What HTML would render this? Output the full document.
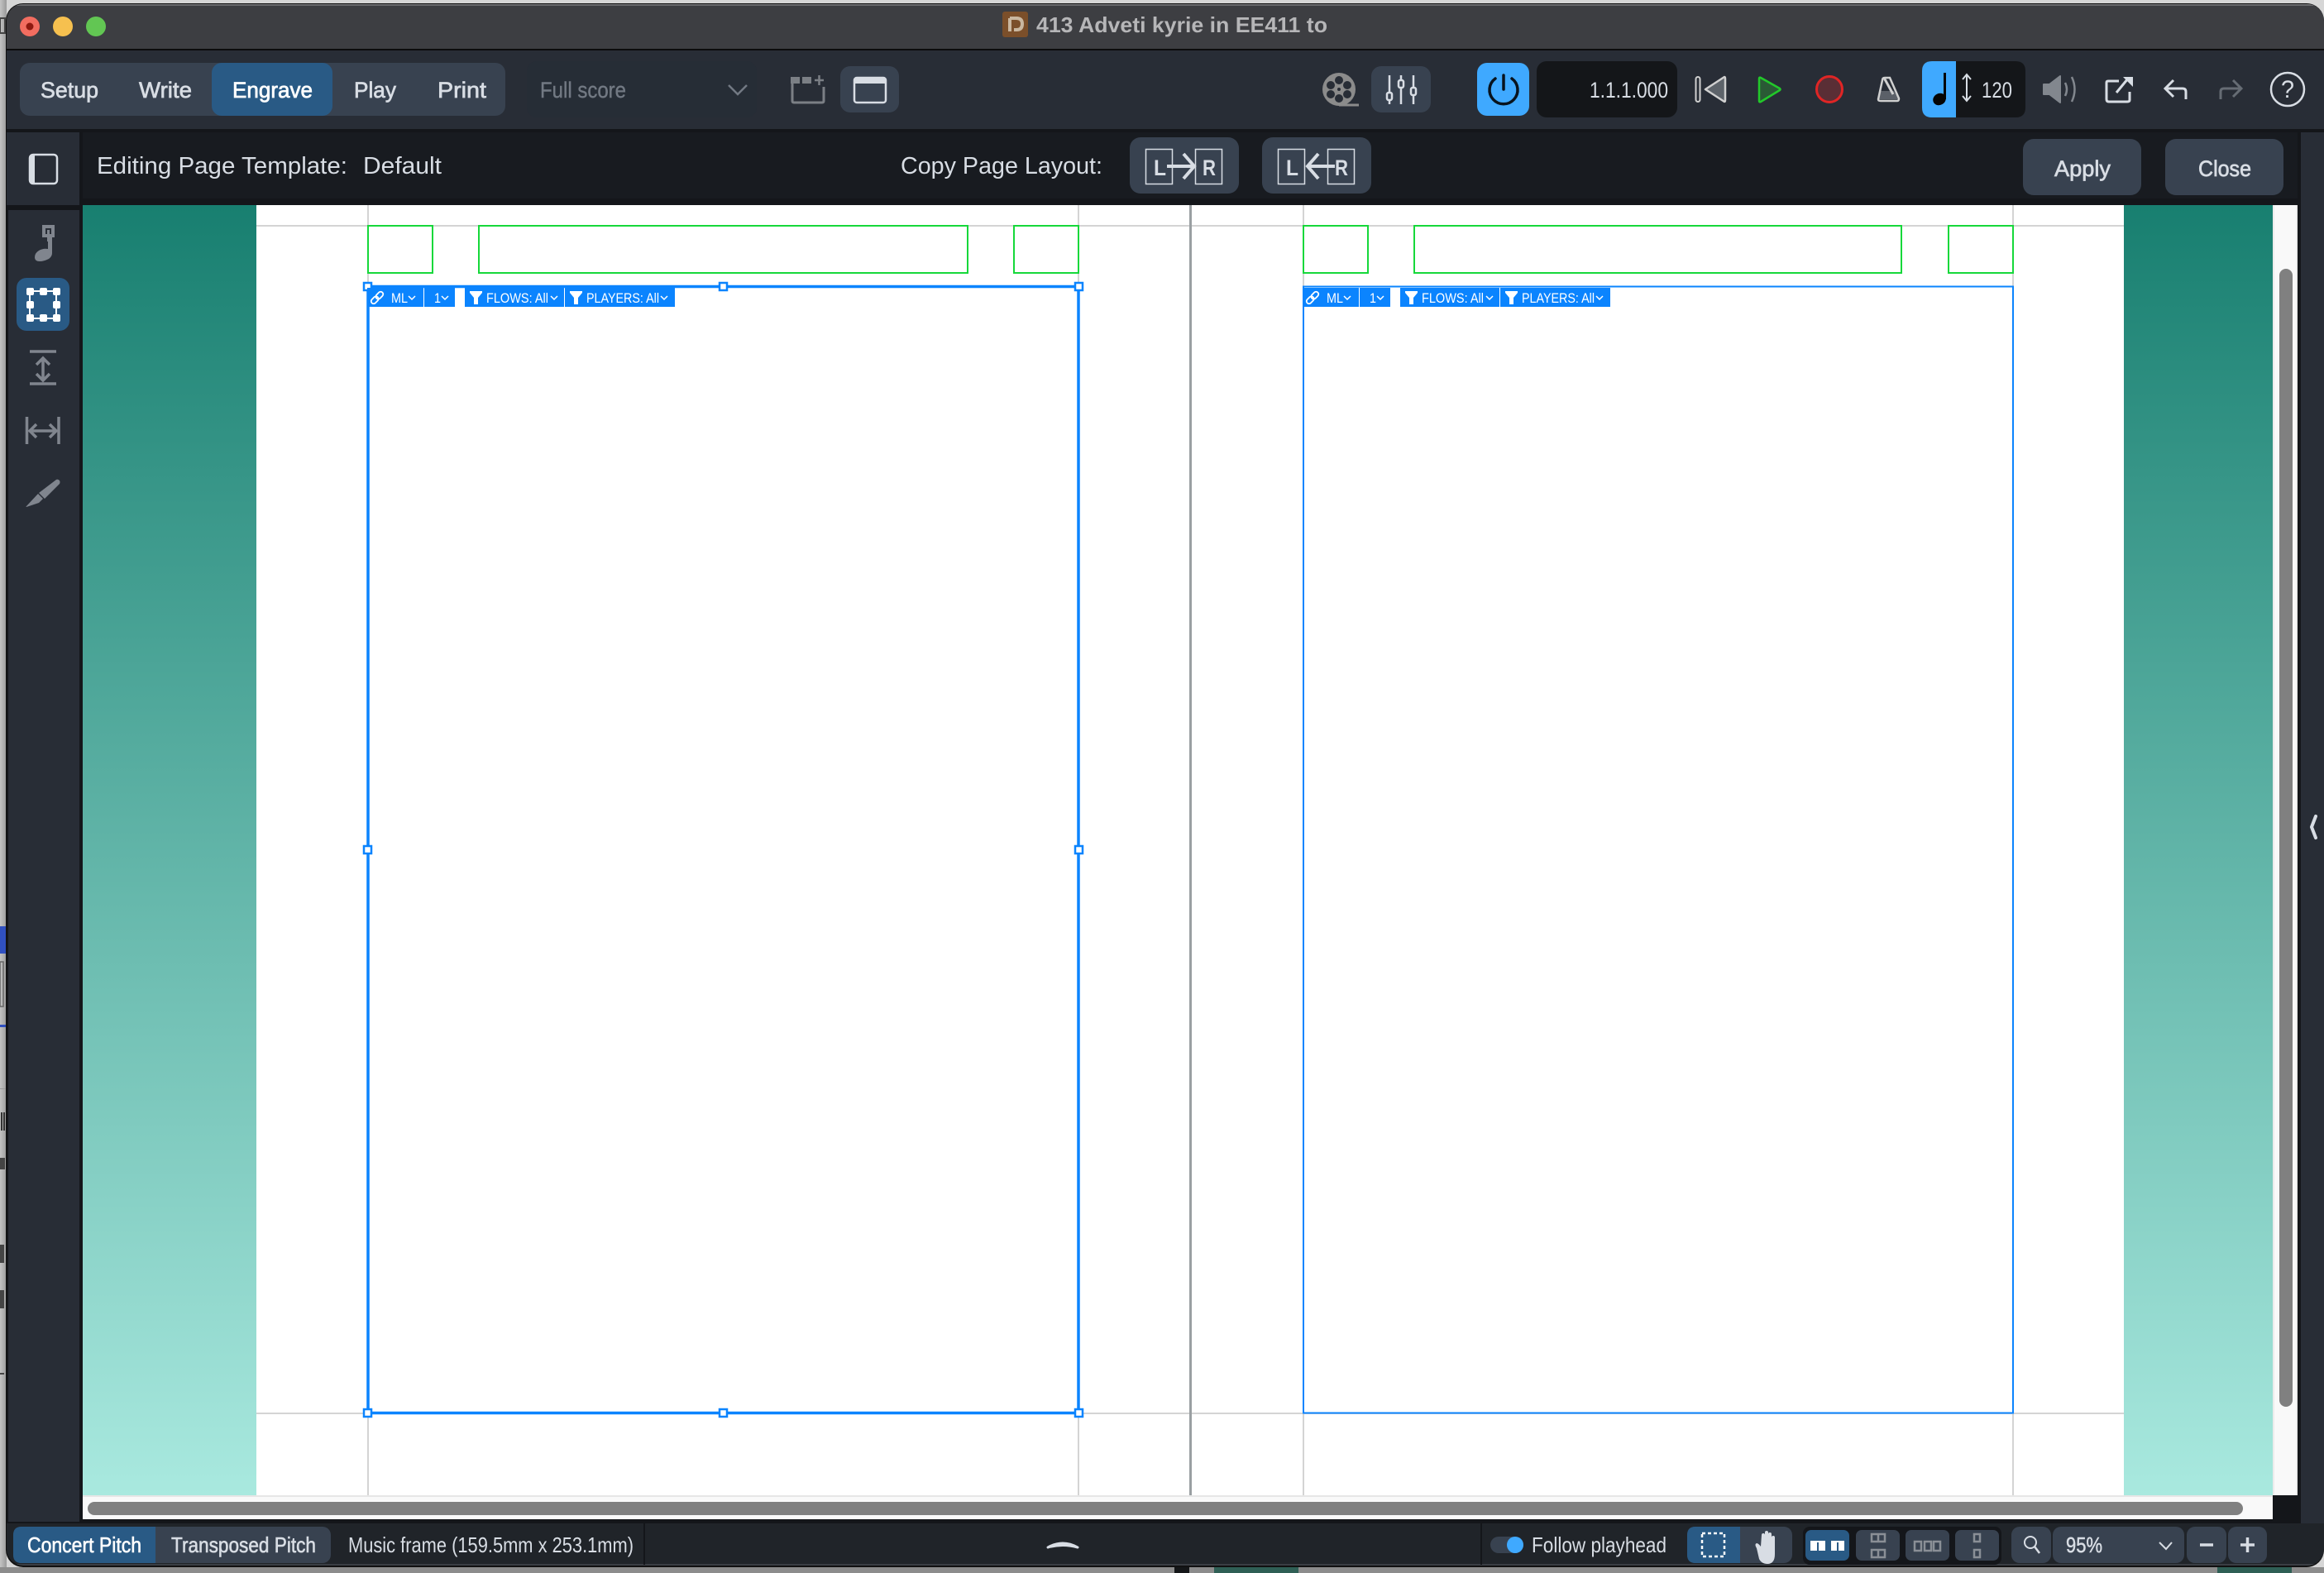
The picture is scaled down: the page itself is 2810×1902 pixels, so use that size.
<!DOCTYPE html>
<html><head><meta charset="utf-8"><title>413 Adveti kyrie in EE411 to</title>
<style>
html,body{margin:0;padding:0;background:#b5b5b5;width:2810px;height:1902px;overflow:hidden}
svg{display:block}
text{font-family:"Liberation Sans",sans-serif;font-size:27px;fill:#d8dde4}
.s{stroke:#d8dde4;stroke-width:.7}
.t{font-size:16.500px;fill:#fff}
.c{font-size:29px}
.b{font-size:26px}
</style></head><body>
<svg width="2810" height="1902" viewBox="0 0 2810 1902" xmlns="http://www.w3.org/2000/svg">
<defs>
<linearGradient id="teal" x1="0" y1="0" x2="0" y2="1"><stop offset="0" stop-color="#187f70"/><stop offset="1" stop-color="#a9e9df"/></linearGradient>
<linearGradient id="back" x1="0" y1="0" x2="1" y2="0"><stop offset="0" stop-color="#c4c4c4"/><stop offset="1" stop-color="#9a9a9a"/></linearGradient>
<clipPath id="win"><rect x="8" y="5" width="2802" height="1888" rx="20"/></clipPath>
</defs>
<!-- desktop behind -->
<rect width="2810" height="1902" fill="#d6d6d6"/>
<rect x="0" y="0" width="8" height="1902" fill="url(#back)"/>
<rect x="0" y="1895" width="2810" height="7" fill="#8c8c8c"/>
<rect x="1420" y="1895" width="18" height="7" fill="#141618"/>
<rect x="1468" y="1895" width="102" height="7" fill="#2f5f55"/>
<rect x="2681" y="1895" width="90" height="7" fill="#2f5f55"/>
<rect x="0" y="1120" width="7" height="33" fill="#3050c0"/>
<rect x="0" y="1163" width="4" height="54" fill="none" stroke="#666" stroke-width="1.500"/>
<rect x="0" y="1239" width="7" height="3" fill="#3050c0"/>
<rect x="0" y="1316" width="7" height="1" fill="#999"/>
<rect x="1" y="1345" width="2" height="22" fill="#333"/><rect x="4" y="1345" width="2" height="22" fill="#333"/>
<rect x="0" y="1400" width="6" height="14" fill="#444"/>
<rect x="0" y="1505" width="5" height="22" fill="#444"/>
<rect x="0" y="1560" width="5" height="22" fill="#444"/>
<rect x="0" y="1660" width="5" height="2" fill="#444"/>
<rect x="0" y="22" width="6" height="18" fill="none" stroke="#444" stroke-width="2"/>
<rect x="7" y="4" width="2803" height="1891" rx="21" fill="#111"/>

<g clip-path="url(#win)">
<!-- title bar -->
<rect x="8" y="5" width="2802" height="55" fill="#3d3e42"/>
<rect x="8" y="5" width="2802" height="2" fill="#6a6b6e"/>
<rect x="8" y="59" width="2802" height="2" fill="#0c0c0d"/>
<circle cx="36" cy="32" r="12" fill="#f26d60"/><circle cx="36" cy="32" r="4.500" fill="#8e1a10"/>
<circle cx="76" cy="32" r="12" fill="#f6c04f"/>
<circle cx="116" cy="32" r="12" fill="#62c653"/>
<rect x="1212" y="14" width="31" height="31" rx="3" fill="#7b4f2a"/>
<path d="M1221 22h8q7 0 7 7t-7 7h-3M1221 22v16" fill="none" stroke="#c9b7a0" stroke-width="4"/>
<text x="1253" y="39" textLength="352" lengthAdjust="spacingAndGlyphs" font-weight="bold" style="fill:#b6b6b8;font-size:26px">413 Adveti kyrie in EE411 to</text>

<!-- toolbar -->
<rect x="8" y="61" width="2802" height="95" fill="#282d36"/>
<rect x="8" y="156" width="2802" height="4" fill="#14161a"/>
<rect x="24" y="76" width="587" height="64" rx="12" fill="#384250"/>
<rect x="256" y="76" width="146" height="64" rx="12" fill="#295a85"/>
<text x="49" y="118" textLength="70" lengthAdjust="spacingAndGlyphs" class="s">Setup</text>
<text x="168" y="118" textLength="64" lengthAdjust="spacingAndGlyphs" class="s">Write</text>
<text x="281" y="118" textLength="97" lengthAdjust="spacingAndGlyphs" style="fill:#fff;stroke:#fff;stroke-width:.7">Engrave</text>
<text x="428" y="118" textLength="51" lengthAdjust="spacingAndGlyphs" class="s">Play</text>
<text x="529" y="118" textLength="59" lengthAdjust="spacingAndGlyphs" class="s">Print</text>
<rect x="637" y="74" width="278" height="68" rx="12" fill="#262d36"/>
<text x="653" y="118" textLength="104" lengthAdjust="spacingAndGlyphs" style="fill:#727983;stroke:#727983;stroke-width:.4">Full score</text>
<path d="M881 103l11 11 11-11" fill="none" stroke="#727983" stroke-width="2.500"/>
<!-- new layout tab -->
<path d="M958 101v21q0 2 2 2h34q2 0 2-2v-17" fill="none" stroke="#7b7f85" stroke-width="3"/>
<rect x="956" y="93" width="11" height="8" fill="#7b7f85"/><rect x="970" y="93" width="11" height="8" fill="#7b7f85"/>
<path d="M985 97h11M990.500 91v12" stroke="#7b7f85" stroke-width="2.500"/>
<!-- window btn -->
<rect x="1016" y="80" width="71" height="56" rx="12" fill="#384250"/>
<rect x="1033" y="94" width="38" height="30" rx="3" fill="none" stroke="#d8dde4" stroke-width="2.500"/>
<rect x="1033" y="94" width="38" height="7" fill="#d8dde4"/>
<!-- reel -->
<circle cx="1619" cy="108" r="20" fill="#8b8b8b"/>
<g fill="#282d36"><circle cx="1619" cy="97" r="5"/><circle cx="1619" cy="119" r="5"/><circle cx="1609" cy="103" r="5"/><circle cx="1629" cy="103" r="5"/><circle cx="1609" cy="114" r="5"/><circle cx="1629" cy="114" r="5"/><circle cx="1619" cy="108" r="2"/></g>
<path d="M1619 127h24" stroke="#8b8b8b" stroke-width="3"/>
<!-- mixer -->
<rect x="1658" y="80" width="72" height="56" rx="12" fill="#384250"/>
<g stroke="#d8dde4" stroke-width="2.500" fill="#384250">
<path d="M1680 91v35M1694 91v35M1709 91v35"/>
<rect x="1677" y="112" width="6" height="9" rx="2"/><rect x="1691" y="97" width="6" height="9" rx="2"/><rect x="1706" y="106" width="6" height="9" rx="2"/>
</g>
<!-- power -->
<rect x="1786" y="76" width="63" height="64" rx="12" fill="#3fa9ff"/>
<path d="M1808 95a17 17 0 1 0 20 0M1818 91v17" fill="none" stroke="#08131e" stroke-width="3.500" stroke-linecap="round"/>
<!-- time -->
<rect x="1858" y="74" width="170" height="68" rx="12" fill="#141619"/>
<text x="1922" y="118" textLength="95" lengthAdjust="spacingAndGlyphs">1.1.1.000</text>
<!-- transport -->
<rect x="2050.500" y="93" width="5" height="30" rx="2.500" fill="none" stroke="#d0d0d0" stroke-width="2"/>
<path d="M2062 108l23-15q1 0 1 2v26q0 2-1 2z" fill="#5d636a" stroke="#d0d0d0" stroke-width="2.500" stroke-linejoin="round"/>
<path d="M2127 95q0-2 2-1l23 13q1 1 0 2l-23 14q-2 1-2-1z" fill="#2a5a35" stroke="#22c82a" stroke-width="2.500" stroke-linejoin="round"/>
<circle cx="2212" cy="108" r="15.500" fill="#5a2e35" stroke="#e02525" stroke-width="3"/>
<path d="M2274 110l16 0 6 10h-25z" fill="#5b6068"/>
<path d="M2279 94h6l11 25q0 3-2 3h-20q-3 0-3-2l5-23q0-3 3-3z" fill="none" stroke="#d0d0d0" stroke-width="2.500"/>
<path d="M2278 94l11 20" stroke="#d0d0d0" stroke-width="3"/>
<!-- tempo -->
<path d="M2365 74h72q12 0 12 12v44q0 12-12 12h-72z" fill="#141619"/>
<path d="M2365 74h-29q-12 0-12 12v44q0 12 12 12h29z" fill="#3fa9ff"/>
<ellipse cx="2345" cy="120" rx="8" ry="7" transform="rotate(-30 2345 120)" fill="#050505"/>
<rect x="2350" y="88" width="3" height="32" fill="#050505"/>
<path d="M2378 90v32M2373 96l5-6 5 6M2373 116l5 6 5-6" fill="none" stroke="#d8dde4" stroke-width="2"/>
<text x="2396" y="118" textLength="37" lengthAdjust="spacingAndGlyphs">120</text>
<!-- speaker -->
<path d="M2471 102h7l13-10v32l-13-10h-7z" fill="#82878e" stroke="#82878e" stroke-linejoin="round" stroke-width="2"/>
<path d="M2497 100q4 8 0 16M2505 93q7 15 0 30" fill="none" stroke="#82878e" stroke-width="2.500"/>
<!-- export -->
<path d="M2562 98h-13q-2 0-2 2v20q0 3 3 3h22q3 0 3-2v-10" fill="none" stroke="#d8dde4" stroke-width="3"/>
<path d="M2559 112l14-17" stroke="#d8dde4" stroke-width="3"/>
<path d="M2567 93h12v12z" fill="#d8dde4"/>
<!-- undo redo -->
<path d="M2643 120v-9q0-4-4-4h-21M2628 97l-10 10 10 10" fill="none" stroke="#d8dde4" stroke-width="3"/>
<path d="M2685 120v-9q0-4 4-4h21M2700 97l10 10-10 10" fill="none" stroke="#666c74" stroke-width="3"/>
<!-- help -->
<circle cx="2766" cy="108" r="20" fill="none" stroke="#d8dde4" stroke-width="2.500"/>
<text x="2758" y="118" textLength="16" lengthAdjust="spacingAndGlyphs" style="font-size:30px">?</text>

<!-- context bar -->
<rect x="8" y="160" width="2802" height="88" fill="#14161a"/>
<rect x="100" y="160" width="2678" height="80" fill="#181b20"/>
<rect x="8" y="160" width="88" height="88" fill="#282d36"/>
<rect x="36" y="187" width="33" height="35" rx="4" fill="none" stroke="#d8dde4" stroke-width="2.500"/>
<rect x="37" y="188" width="5" height="33" fill="#d8dde4"/>
<text x="117" y="210" textLength="303" lengthAdjust="spacingAndGlyphs" class="c">Editing Page Template:</text>
<text x="439" y="210" textLength="95" lengthAdjust="spacingAndGlyphs" class="c">Default</text>
<text x="1089" y="210" textLength="244" lengthAdjust="spacingAndGlyphs" class="c">Copy Page Layout:</text>
<rect x="1366" y="166" width="132" height="68" rx="13" fill="#384250"/>
<rect x="1526" y="166" width="132" height="68" rx="13" fill="#384250"/>
<g fill="none" stroke="#d8dde4" stroke-width="1.500">
<rect x="1385.500" y="180.500" width="32" height="42"/><rect x="1445.500" y="180.500" width="32" height="42"/>
<rect x="1545.500" y="180.500" width="32" height="42"/><rect x="1605.500" y="180.500" width="32" height="42"/>
</g>
<text x="1395" y="212" textLength="15" lengthAdjust="spacingAndGlyphs" font-weight="bold">L</text>
<text x="1454" y="212" textLength="16" lengthAdjust="spacingAndGlyphs" font-weight="bold">R</text>
<text x="1555" y="212" textLength="15" lengthAdjust="spacingAndGlyphs" font-weight="bold">L</text>
<text x="1614" y="212" textLength="16" lengthAdjust="spacingAndGlyphs" font-weight="bold">R</text>
<path d="M1411 201h33M1431 186l13 15-13 15" fill="none" stroke="#d8dde4" stroke-width="4"/>
<path d="M1614 201h-33M1594 186l-13 15 13 15" fill="none" stroke="#d8dde4" stroke-width="4"/>
<rect x="2446" y="168" width="143" height="68" rx="13" fill="#384250"/>
<rect x="2618" y="168" width="143" height="68" rx="13" fill="#384250"/>
<text x="2484" y="213" textLength="68" lengthAdjust="spacingAndGlyphs" class="s">Apply</text>
<text x="2658" y="213" textLength="64" lengthAdjust="spacingAndGlyphs" class="s">Close</text>

<!-- left panel -->
<rect x="8" y="248" width="92" height="1594" fill="#14161a"/>
<rect x="10" y="254" width="86" height="1586" fill="#282d36"/>
<g fill="#80858e">
<path fill-rule="evenodd" d="M51 272h15v15h-3v19q0 4-4 7-6 3-11 3-6 0-6-5 0-5 5-8 5-3 11-2v-14h-7zM55 276v7h7v-7z"/>
<rect x="57" y="278" width="3" height="14"/>
</g>
<rect x="20" y="336" width="64" height="64" rx="12" fill="#295a85"/>
<g fill="#fff">
<path d="M36 352h32v33H36z" fill="none" stroke="#fff" stroke-width="2"/>
<rect x="32" y="348" width="9" height="9" rx="2"/><rect x="48" y="348" width="9" height="9" rx="2"/><rect x="64" y="348" width="9" height="9" rx="2"/>
<rect x="32" y="364" width="9" height="9" rx="2"/><rect x="64" y="364" width="9" height="9" rx="2"/>
<rect x="32" y="380" width="9" height="9" rx="2"/><rect x="48" y="380" width="9" height="9" rx="2"/><rect x="64" y="380" width="9" height="9" rx="2"/>
</g>
<g fill="none" stroke="#80858e" stroke-width="3.500">
<path d="M36 425h32M36 464h32M52 433v27M44 441l8-8 8 8M44 452l8 8 8-8"/>
<path d="M32.500 504v33M71 504v33M37 521h30M44 513l-8 8 8 8M60 513l8 8-8 8"/>
</g>
<path d="M68 580q2-1 4 1 1 2 0 4l-18 18-7-7zM46 597l6 6-5 5-15 5q-1 0 0-1z" fill="#80858e"/>

<!-- right panel -->
<rect x="2778" y="240" width="4" height="1602" fill="#14161a"/>
<rect x="2782" y="160" width="28" height="1682" fill="#282d36"/>
<rect x="2778" y="160" width="4" height="88" fill="#14161a"/>
<path d="M2800 987l-5 13 5 13" fill="none" stroke="#d8dde4" stroke-width="4" stroke-linecap="round" stroke-linejoin="round"/>

<!-- page area -->
<rect x="100" y="248" width="2678" height="1594" fill="#f9f9f9"/>
<rect x="100" y="248" width="210" height="1560" fill="url(#teal)"/>
<rect x="2568" y="248" width="180" height="1560" fill="url(#teal)"/>
<rect x="310" y="248" width="2258" height="1560" fill="#fff"/>
<rect x="2748" y="248" width="2" height="1560" fill="#ececec"/>
<rect x="2776" y="248" width="2" height="1560" fill="#ececec"/>
<rect x="2756" y="325" width="16" height="1376" rx="8" fill="#808080"/>
<rect x="100" y="1808" width="2648" height="2" fill="#e6e6e6"/>
<rect x="106" y="1816" width="2606" height="16" rx="8" fill="#808080"/>
<rect x="2748" y="1808" width="30" height="34" fill="#14161a"/>
<rect x="100" y="1837" width="2678" height="5" fill="#14161a"/>

<!-- guides -->
<g fill="#d4d4d4">
<rect x="310" y="272" width="2258" height="2"/>
<rect x="310" y="1708" width="2258" height="2"/>
<rect x="444" y="248" width="2" height="1560"/>
<rect x="1303" y="248" width="2" height="1560"/>
<rect x="1575" y="248" width="2" height="1560"/>
<rect x="2433" y="248" width="2" height="1560"/>
</g>
<rect x="1438" y="248" width="3" height="1560" fill="#9a9fa2"/>

<!-- header frames -->
<g fill="none" stroke="#16d83a" stroke-width="2">
<rect x="445" y="273" width="78" height="57"/><rect x="579" y="273" width="591" height="57"/><rect x="1226" y="273" width="78" height="57"/>
<rect x="1576" y="273" width="78" height="57"/><rect x="1710" y="273" width="589" height="57"/><rect x="2356" y="273" width="78" height="57"/>
</g>
<!-- music frames -->
<rect x="1576" y="346.500" width="858" height="1362" fill="#fff" stroke="#0b84fe" stroke-width="2"/>
<rect x="445" y="346.500" width="859" height="1362" fill="#fff" stroke="#0b84fe" stroke-width="3.500"/>
<g fill="#fff" stroke="#0b84fe" stroke-width="2.500">
<rect x="440" y="342" width="9" height="9"/><rect x="870" y="342" width="9" height="9"/><rect x="1300" y="342" width="9" height="9"/>
<rect x="440" y="1023" width="9" height="9"/><rect x="1300" y="1023" width="9" height="9"/>
<rect x="440" y="1704" width="9" height="9"/><rect x="870" y="1704" width="9" height="9"/><rect x="1300" y="1704" width="9" height="9"/>
</g>
<!-- frame chips left -->
<g>
<rect x="444" y="348" width="68" height="23" fill="#0b84fe"/>
<rect x="513" y="348" width="37" height="23" fill="#0b84fe"/>
<rect x="562" y="348" width="120" height="23" fill="#0b84fe"/>
<rect x="683" y="348" width="133" height="23" fill="#0b84fe"/>
<g fill="none" stroke="#fff" stroke-width="1.800" transform="rotate(-45 456 360)"><rect x="447" y="357" width="10" height="6" rx="3"/><rect x="455" y="357" width="10" height="6" rx="3"/></g>
<text x="473" y="366" textLength="20" lengthAdjust="spacingAndGlyphs" class="t">ML</text>
<path d="M494 358l4 4 4-4M534 358l4 4 4-4M666 358l4 4 4-4M799 358l4 4 4-4" fill="none" stroke="#fff" stroke-width="1.500"/>
<text x="525" y="366" textLength="8" lengthAdjust="spacingAndGlyphs" class="t">1</text>
<path d="M568 352h15v2l-5 6v8h-5v-8l-5-6zM689 352h15v2l-5 6v8h-5v-8l-5-6z" fill="#fff"/>
<text x="588" y="366" textLength="75" lengthAdjust="spacingAndGlyphs" class="t">FLOWS: All</text>
<text x="709" y="366" textLength="88" lengthAdjust="spacingAndGlyphs" class="t">PLAYERS: All</text>
</g>
<!-- frame chips right -->
<g transform="translate(1131 0)">
<rect x="444" y="348" width="68" height="23" fill="#0b84fe"/>
<rect x="513" y="348" width="37" height="23" fill="#0b84fe"/>
<rect x="562" y="348" width="120" height="23" fill="#0b84fe"/>
<rect x="683" y="348" width="133" height="23" fill="#0b84fe"/>
<g fill="none" stroke="#fff" stroke-width="1.800" transform="rotate(-45 456 360)"><rect x="447" y="357" width="10" height="6" rx="3"/><rect x="455" y="357" width="10" height="6" rx="3"/></g>
<text x="473" y="366" textLength="20" lengthAdjust="spacingAndGlyphs" class="t">ML</text>
<path d="M494 358l4 4 4-4M534 358l4 4 4-4M666 358l4 4 4-4M799 358l4 4 4-4" fill="none" stroke="#fff" stroke-width="1.500"/>
<text x="525" y="366" textLength="8" lengthAdjust="spacingAndGlyphs" class="t">1</text>
<path d="M568 352h15v2l-5 6v8h-5v-8l-5-6zM689 352h15v2l-5 6v8h-5v-8l-5-6z" fill="#fff"/>
<text x="588" y="366" textLength="75" lengthAdjust="spacingAndGlyphs" class="t">FLOWS: All</text>
<text x="709" y="366" textLength="88" lengthAdjust="spacingAndGlyphs" class="t">PLAYERS: All</text>
</g>

<!-- status bar -->
<rect x="8" y="1842" width="2802" height="50" fill="#202429"/>
<rect x="8" y="1891" width="2802" height="2" fill="#3a3e44"/>
<rect x="16" y="1846" width="384" height="44" rx="10" fill="#384250"/>
<path d="M26 1846h162v44H26q-10 0-10-10v-24q0-10 10-10z" fill="#295a85"/>
<text x="33" y="1877" textLength="138" lengthAdjust="spacingAndGlyphs" class="b" style="fill:#fff;stroke:#fff;stroke-width:.6">Concert Pitch</text>
<text x="207" y="1877" textLength="175" lengthAdjust="spacingAndGlyphs" class="b" style="stroke:#d8dde4;stroke-width:.6">Transposed Pitch</text>
<text x="421" y="1877" textLength="345" lengthAdjust="spacingAndGlyphs" class="b">Music frame (159.5mm x 253.1mm)</text>
<rect x="778" y="1842" width="2" height="50" fill="#14161a"/>
<rect x="1790" y="1842" width="2" height="50" fill="#14161a"/>
<path d="M1267 1871q18-10 36 0q-18-5-36 0z" fill="#d8dde4" stroke="#d8dde4" stroke-width="3" stroke-linejoin="round"/>
<rect x="1802" y="1858" width="40" height="20" rx="10" fill="#384250"/>
<circle cx="1832" cy="1868" r="10" fill="#3fa9ff"/>
<text x="1852" y="1877" textLength="163" lengthAdjust="spacingAndGlyphs" class="b">Follow playhead</text>
<rect x="2040" y="1846" width="127" height="44" rx="10" fill="#384250"/>
<path d="M2050 1846h54v44h-54q-10 0-10-10v-24q0-10 10-10z" fill="#295a85"/>
<rect x="2058" y="1854" width="27" height="28" fill="none" stroke="#fff" stroke-width="2.500" stroke-dasharray="4 3"/>
<path d="M2124 1872q-3-5 0-6 2 0 5 4l1-14q0-2 2-2t2 2v-3q0-2 2-2t2 2v2q0-2 2-2t2 2v4q0-2 2-2t2 2v20q0 12-9 12-7 0-10-6z" fill="#d8dde4"/>
<rect x="2180" y="1846" width="240" height="46" rx="8" fill="#14161a"/>
<rect x="2183" y="1850" width="53" height="37" rx="7" fill="#295a85"/>
<rect x="2244" y="1850" width="53" height="37" rx="7" fill="#384250"/>
<rect x="2304" y="1850" width="53" height="37" rx="7" fill="#384250"/>
<rect x="2364" y="1850" width="53" height="37" rx="7" fill="#384250"/>
<rect x="2189" y="1863" width="18" height="12" fill="#fff"/><rect x="2214" y="1863" width="16" height="12" fill="#fff"/>
<rect x="2197" y="1865" width="2" height="10" fill="#295a85"/><rect x="2221" y="1865" width="2" height="10" fill="#295a85"/>
<g fill="none" stroke="#8a8f96" stroke-width="2.500">
<rect x="2263" y="1855" width="16" height="9"/><path d="M2271 1855v9"/>
<rect x="2263" y="1874" width="16" height="9"/><path d="M2271 1874v9"/>
<rect x="2315" y="1864" width="8" height="11"/><rect x="2327" y="1864" width="8" height="11"/><rect x="2338" y="1864" width="8" height="11"/>
<rect x="2387" y="1855" width="7" height="9"/><rect x="2387" y="1874" width="7" height="9"/>
</g>
<rect x="2432" y="1846" width="48" height="44" rx="10" fill="#384250"/>
<rect x="2482" y="1846" width="159" height="44" rx="10" fill="#384250"/>
<rect x="2644" y="1846" width="48" height="44" rx="10" fill="#384250"/>
<rect x="2694" y="1846" width="47" height="44" rx="10" fill="#384250"/>
<circle cx="2455" cy="1865" r="7" fill="none" stroke="#d8dde4" stroke-width="2"/>
<path d="M2460 1870l6 8" stroke="#d8dde4" stroke-width="2.500"/>
<text x="2498" y="1877" textLength="44" lengthAdjust="spacingAndGlyphs" class="b" style="stroke:#d8dde4;stroke-width:.5">95%</text>
<path d="M2611 1865l8 8 7-8" fill="none" stroke="#d8dde4" stroke-width="2"/>
<path d="M2660 1868h16M2709 1868h17M2717.500 1859v18" stroke="#d8dde4" stroke-width="3.500"/>
</g>
</svg>
</body></html>
